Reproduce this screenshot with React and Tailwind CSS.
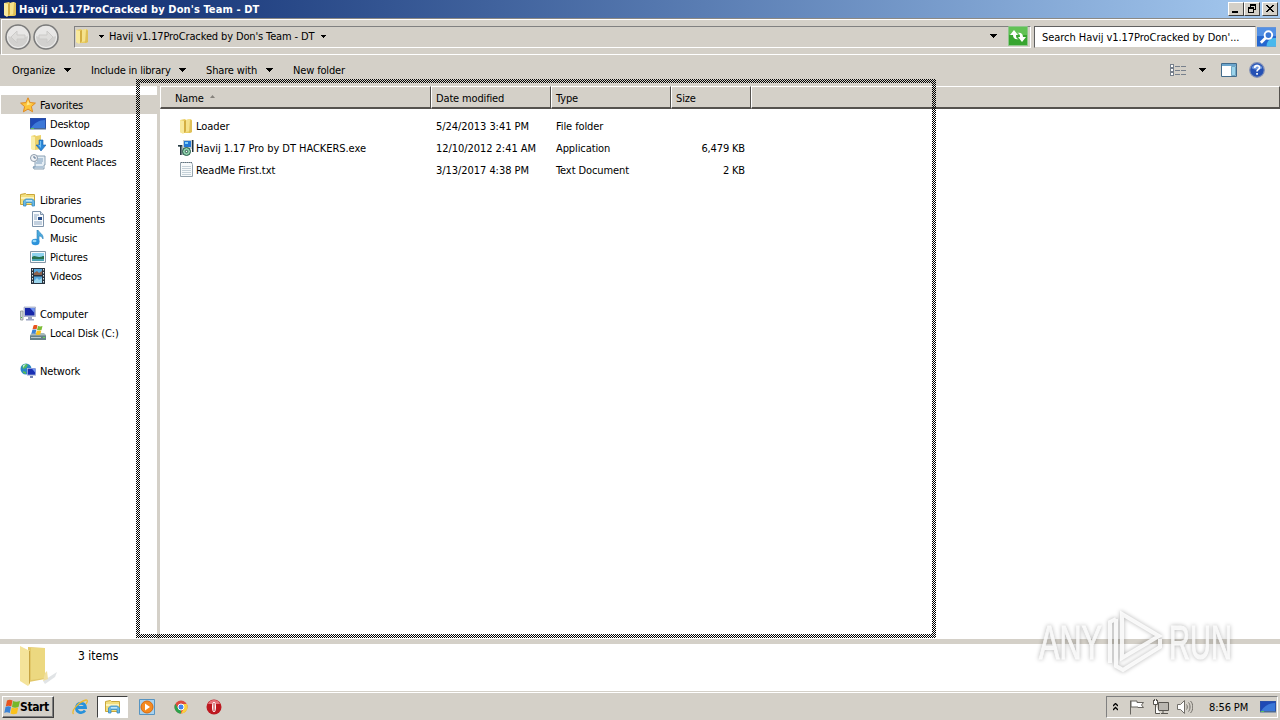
import React from "react";

const Folder = ({ className = "w-4 h-4" }) => (
  <svg className={className} viewBox="0 0 16 16">
    <path d="M2 2l5-1 1 1 4-1 2 1v12l-2 1H4l-2-1z" fill="#e9cd62" />
    <path d="M2 2l4 1v12l-1 1-3-2z" fill="#f8e99c" />
    <path d="M6 3l2-1v11l-2 2z" fill="#d3ae42" />
    <path d="M8 2l4-1v12l-4 1z" fill="#f5e28c" />
    <path d="M12 2l2 1v11l-3 1z" fill="#dfc058" />
  </svg>
);

const Star = () => (
  <svg className="w-4 h-4" viewBox="0 0 16 16">
    <path
      d="M8 .8l2.1 4.8 5.3.5-4 3.5 1.2 5.2L8 12.1l-4.6 2.7 1.2-5.2-4-3.5 5.3-.5z"
      fill="#fdc53a"
      stroke="#e08a20"
    />
    <path d="M8 3l1.3 3.6 3 .2-5.8 1.6z" fill="#ffe890" />
  </svg>
);

const DesktopIcon = () => (
  <svg className="w-4 h-4" viewBox="0 0 16 16">
    <rect x="0" y="2" width="16" height="11" fill="#2a50a8" />
    <rect x="1" y="3" width="14" height="9" fill="#1f49b5" />
    <path d="M1 12c3-5 8-8 14-8v8z" fill="#3c78d8" />
    <path d="M0 12h16v1.500H0z" fill="#4b6a94" />
    <path d="M1 12h3v1H1z" fill="#5bc05b" />
  </svg>
);

const Downloads = () => (
  <svg className="w-4 h-4" viewBox="0 0 16 16">
    <path d="M1 1l4-1 1 1 5-1v14l-6 1-4-1z" fill="#ecd26b" />
    <path d="M1 1l4 1v13l-4-1z" fill="#faeeaa" />
    <path d="M9 5h4v5h3l-5 6-5-6h3z" fill="#2c88d8" stroke="#1b61ab" strokeWidth=".6" />
    <path d="M10 6h1v7l-3-3h2z" fill="#74c0f4" />
  </svg>
);

const Recent = () => (
  <svg className="w-4 h-4" viewBox="0 0 16 16">
    <path d="M5 2h10v9h-1v4H4l-1-2h2z" fill="#e4edf4" stroke="#8097ab" strokeWidth=".9" />
    <path d="M7 5h6M7 7h6M6 9h6M3 13h10" stroke="#7d9dbb" />
    <circle cx="4" cy="4" r="3.500" fill="#f1f3f6" stroke="#8e9cab" />
    <path d="M4 2v2h2" stroke="#58738f" fill="none" />
  </svg>
);

const Libraries = () => (
  <svg className="w-4 h-4" viewBox="0 0 16 16">
    <path d="M.5 2.500l5-1 1 1h8v10H.5z" fill="#f3df7d" stroke="#c9a63a" />
    <path d="M1 5h13v2H1z" fill="#fbf3bd" />
    <path d="M3.500 14V9l2-2h7l2 2v5h-2.500v-3.500h-6V14z" fill="#68b8e6" stroke="#388bc1" strokeWidth=".8" />
    <path d="M6 8h6v1.500H6z" fill="#bce5fa" />
  </svg>
);

const Documents = () => (
  <svg className="w-4 h-4" viewBox="0 0 16 16">
    <path d="M2.500.5h8l3 3v12h-11z" fill="#f9fbfd" stroke="#7e93aa" />
    <path d="M4 4h5M4 6h3M4 8h3M4 11h8M4 13h8" stroke="#8ba5c0" />
    <path d="M8 6h4v3H8z" fill="#274c88" />
    <path d="M10.500.5v3h3" fill="#d5e1ec" stroke="#7e93aa" />
  </svg>
);

const Music = () => (
  <svg className="w-4 h-4" viewBox="0 0 16 16">
    <path d="M8 0c1 3 6 4 5 9-1-2-2-3-4-3v6H7V0z" fill="#4ba9dc" stroke="#2a80bb" strokeWidth=".6" />
    <ellipse cx="5.500" cy="12" rx="4" ry="3.200" fill="#2d93da" />
    <ellipse cx="4.500" cy="11" rx="2" ry="1.300" fill="#96d8f7" />
  </svg>
);

const Pictures = () => (
  <svg className="w-4 h-4" viewBox="0 0 16 16">
    <path d="M.5 2.500h15v11H.5z" fill="#f7fafc" stroke="#8497a7" />
    <path d="M2 4h12v8H2z" fill="#8fd3ee" />
    <path d="M2 8c3-2 4 0 7 0s3-1 5-1v4H2z" fill="#28734f" />
    <path d="M2 10h12v2H2z" fill="#4ba3b5" />
  </svg>
);

const Videos = () => (
  <svg className="w-4 h-4" viewBox="0 0 16 16">
    <path d="M1 0h14v16H1z" fill="#28333f" />
    <path d="M4 1h8v6H4zM4 8.500h8V15H4z" fill="#56a7dd" />
    <path d="M4 5l3-2 2 2 3-2v4H4z" fill="#8d624e" />
    <path d="M4 13l3-3 2 2 3-2v5H4z" fill="#9bd5ec" />
    <path d="M2.500 1v14M13.500 1v14" stroke="#dfe6ea" strokeDasharray="1.500 1.500" />
  </svg>
);

const Computer = () => (
  <svg className="w-4 h-4" viewBox="0 0 16 16">
    <path d="M.5 5h2.500v9H.5z" fill="#cfd6d6" stroke="#899393" strokeWidth=".8" />
    <path d="M1 11h1v1H1z" fill="#4eb844" />
    <path d="M4 1h11.500v9.500H4z" fill="#c7cee0" stroke="#8a95b5" strokeWidth=".6" />
    <path d="M5 2h9.500v7.500H5z" fill="#1626a8" />
    <path d="M10 2h4.500v5z" fill="#6c91ef" />
    <path d="M8 11h4v2h2v1.500H6V13h2z" fill="#9ba4c4" />
  </svg>
);

const StartFlag = () => (
  <svg className="w-4 h-4" viewBox="0 0 16 16">
    <path d="M3 1.500c2-1 3.500-1 5.500 0L7.300 7.500c-2-1-4-1-5.500 0z" fill="#e8541e" />
    <path d="M9 2c2 1 4.500 1 7 0L14.500 8c-2.500 1-4.500 1-6.500 0z" fill="#76b82a" />
    <path d="M1.500 8c2-1 4-1 5.500 0l-1.200 6c-2-1-4-1-5.500 0z" fill="#3b83d6" />
    <path d="M7.700 8.500c2 1 4 1 6.500 0l-1.200 6c-2.500 1-5 1-6.500 0z" fill="#fbc21b" />
  </svg>
);

const Disk = () => (
  <svg className="w-4 h-4" viewBox="0 0 16 16">
    <path d="M2 8h12l2 2v5H0v-5z" fill="#a5b8bc" />
    <path d="M0 10.500h16V15H0z" fill="#668188" />
    <path d="M1 12h10v1H1z" fill="#b9c9cd" />
    <path d="M13 12h2v1h-2z" fill="#67dc54" />
    <path d="M3.500.5c1.500-.7 2.500-.5 4 0l-1 4c-1.500-.6-2.500-.6-4 0z" fill="#e8541e" />
    <path d="M8 1c1.500.6 3 .6 4.500 0l-1 4c-1.500.6-3 .6-4.500 0z" fill="#7dbc35" />
    <path d="M2.300 5c1.500-.6 2.500-.6 4 0l-1 4c-1.500-.6-2.500-.6-4 0z" fill="#3b83d6" />
    <path d="M6.800 5.500c1.500.6 3 .6 4.500 0l-1 4c-1.500.6-3 .6-4.500 0z" fill="#fbc21b" />
  </svg>
);

const Network = () => (
  <svg className="w-4 h-4" viewBox="0 0 16 16">
    <circle cx="6" cy="6" r="5.500" fill="#2b86c6" />
    <path d="M2 3c2-3 5-2 6-1L6 5 3 6zM3 8l3 1v2L3 10z" fill="#54bb5c" />
    <path d="M3 2l3-1-3 4z" fill="#b6e8ee" />
    <path d="M7 5h9v8H7z" fill="#c3cce4" />
    <path d="M7.700 5.700h7.600v6H7.700z" fill="#1930b4" />
    <path d="M12 5.700h3.300v4z" fill="#6f95f0" />
    <path d="M10 13h3v2h-3z" fill="#7583b4" />
  </svg>
);

const Installer = () => (
  <svg className="w-4 h-4" viewBox="0 0 16 16">
    <path d="M1 5h6v10H2v-8H0z" fill="#a9b4b6" />
    <path d="M0 5h4v1.500H0zM2 6h1.500v9H2zM6 6h1v8H6z" fill="#263a42" />
    <path d="M5 0h10v9H5z" fill="#c2cbcf" />
    <path d="M6 1h7v6H6z" fill="#2378d6" />
    <path d="M7 2h3v2H7z" fill="#82d2f9" />
    <path d="M14 0h1.500v12H14z" fill="#203038" />
    <circle cx="8.500" cy="11.500" r="4" fill="#8fd0ab" stroke="#245846" />
    <circle cx="8.500" cy="11.500" r="1.200" fill="#fff" stroke="#245846" />
  </svg>
);

const TextFile = () => (
  <svg className="w-4 h-4" viewBox="0 0 16 16">
    <path d="M2.500.5h11l1 2v12h-12z" fill="#f7fafb" stroke="#94a3ad" />
    <path d="M4 4.500h9M4 6.500h9M4 8.500h9M4 10.500h9M4 12.500h9" stroke="#b7c6cf" strokeWidth=".8" />
    <path d="M3 .5h11" stroke="#65747d" strokeDasharray="1 1" />
  </svg>
);

const Caret = ({ className = "w-[7px] h-1" }) => (
  <svg className={`shrink-0 ${className}`} viewBox="0 0 7 4" shapeRendering="crispEdges">
    <path d="M0 0h7L3.500 4z" />
  </svg>
);

const RoundArrow = ({ flip }) => (
  <svg className={`w-[26px] h-[26px] ${flip ? "-scale-x-100" : ""}`} viewBox="0 0 26 26">
    <circle cx="13" cy="13" r="12" fill="#d2d1cf" stroke="#7b7b7b" strokeWidth="1.500" />
    <circle cx="13" cy="13" r="10.500" fill="none" stroke="#efefee" />
    <path d="M3 12a10 10 0 0 1 20 0c-6 2-14 2-20 0z" fill="#e8e7e6" />
    <path d="M6 13l6-6v4h8v4h-8v4z" fill="#dedddb" stroke="#cbcac8" />
  </svg>
);

const places = [
  { label: "Favorites", icon: Star, root: true, active: true },
  { label: "Desktop", icon: DesktopIcon },
  { label: "Downloads", icon: Downloads },
  { label: "Recent Places", icon: Recent },
  null,
  { label: "Libraries", icon: Libraries, root: true },
  { label: "Documents", icon: Documents },
  { label: "Music", icon: Music },
  { label: "Pictures", icon: Pictures },
  { label: "Videos", icon: Videos },
  null,
  { label: "Computer", icon: Computer, root: true },
  { label: "Local Disk (C:)", icon: Disk },
  null,
  { label: "Network", icon: Network, root: true },
];

const files = [
  { name: "Loader", date: "5/24/2013 3:41 PM", type: "File folder", size: "", icon: Folder },
  { name: "Havij 1.17 Pro by DT HACKERS.exe", date: "12/10/2012 2:41 AM", type: "Application", size: "6,479 KB", icon: Installer },
  { name: "ReadMe First.txt", date: "3/13/2017 4:38 PM", type: "Text Document", size: "2 KB", icon: TextFile },
];

const WindowButton = ({ children, className = "" }) => (
  <button
    className={`w-4 h-[14px] bg-[#d4d0c8] border border-t-white border-l-white border-r-[#404040] border-b-[#404040] ${className}`}
  >
    <svg className="w-[14px] h-3" viewBox="0 0 14 12" fill="none" stroke="#000" shapeRendering="crispEdges">
      {children}
    </svg>
  </button>
);

const TitleBar = () => (
  <div className="h-[18px] flex items-center pl-[2px] pr-[2px] bg-linear-to-r from-[#0a246a] to-[#a6caf0] shrink-0">
    <Folder />
    <span className="ml-px text-white font-bold tracking-[0.11px] text-[11px]">
      Havij v1.17ProCracked by Don's Team - DT
    </span>
    <div className="ml-auto flex">
      <WindowButton>
        <path d="M3 9h6" strokeWidth="2" />
      </WindowButton>
      <WindowButton>
        <path d="M5 2h6M5 1.500h6M5.500 1v3M10.500 2v5M8 6.500h3M3 4.500h6M3 5.500h6M3.500 5v5M8.500 5v5M3 9.500h6" />
      </WindowButton>
      <WindowButton className="ml-[2px]">
        <path d="M3 2l7 7M4 2l7 7M10 2L3 9M11 2L4 9" shapeRendering="auto" />
      </WindowButton>
    </div>
  </div>
);

const AddressBar = () => (
  <div className="h-[37px] shrink-0 flex items-center pl-1 pr-[2px] border-t border-b border-t-[#8c8984] border-b-white border-l border-l-[#aaa7a1] shadow-[inset_1px_1px_0_#fff]">
    <div className="w-[56px] flex gap-[2px]">
      <RoundArrow />
      <RoundArrow flip />
    </div>
    <div className="ml-[13px] w-[957px] h-[22px] pb-px flex items-center border border-t-[#808080] border-l-[#808080] border-b-white border-r-white">
      <Folder className="w-4 h-4 -ml-px shrink-0" />
      <Caret className="ml-[9px] w-[5px] h-[3px]" />
      <span className="ml-[5px] !pt-px tracking-[-0.13px]">Havij v1.17ProCracked by Don's Team - DT</span>
      <Caret className="ml-[7px] w-[5px] h-[3px]" />
      <Caret className="ml-auto mr-[11px] w-[7px] h-1" />
      <svg className="w-5 h-5 mr-[2px]" viewBox="0 0 20 20">
        <path d="M.5.5h19v19H.5z" fill="#37a52f" stroke="#8fc78c" />
        <path d="M1 1h18v8H1z" fill="#62c255" />
        <path d="M2 9l4-5 4 5H8c0 3 1 4 3 4-4 1-6-1-6-4z" fill="#fff" />
        <path d="M18 11l-4 5-4-5h2c0-3-1-4-3-4 4-1 6 1 6 4z" fill="#fff" />
      </svg>
    </div>
    <div className="ml-[3px] w-[222px] h-[22px] pl-[7px] flex items-center bg-white border border-t-[#606060] border-l-[#606060] border-[#d4d0c8]">
      <span className="tracking-[-0.05px]">Search Havij v1.17ProCracked by Don'...</span>
    </div>
    <svg className="ml-px w-[19px] h-[20px]" viewBox="0 0 20 20">
      <path d="M0 0h20v20H0z" fill="#2567cf" />
      <path d="M0 0h20v9H0z" fill="#5290e4" />
      <path d="M10 20c0-6 4-9 10-9v9z" fill="#49b8ec" />
      <path d="M9 11l-5 5" stroke="#fff" strokeWidth="3" />
      <circle cx="12" cy="8" r="4" fill="#3977d5" stroke="#fff" strokeWidth="2" />
    </svg>
  </div>
);

const Toolbar = () => (
  <div className="h-[31px] shrink-0 flex items-center pb-px pl-3 pr-[15px] tracking-[-0.15px]">
    <span className="w-[52px]">Organize</span>
    <Caret />
    <span className="ml-5 w-[88px] tracking-[-0.2px]">Include in library</span>
    <Caret />
    <span className="ml-5 w-[60px]">Share with</span>
    <Caret />
    <span className="ml-5">New folder</span>
    <svg className="ml-auto w-4 h-[13px]" viewBox="0 0 16 13" shapeRendering="crispEdges">
      <path d="M.5.5h3v3h-3zM.5 4.500h3v3h-3zM.5 8.500h3v3h-3z" fill="#fff" stroke="#77808c" />
      <path d="M5 2.500h11M5 6.500h11M5 10.500h11" stroke="#77808c" strokeDasharray="5 1" />
    </svg>
    <Caret className="ml-[13px] w-[7px] h-1" />
    <svg className="ml-[15px] w-4 h-[14px]" viewBox="0 0 16 14">
      <path d="M.5.5h15v13H.5z" fill="#fff" stroke="#426b8b" />
      <path d="M1 1h14v2H1z" fill="#6ba5cc" />
      <path d="M10.500 3.500h4v9h-4z" fill="#9bd4ec" stroke="#5b95b5" strokeWidth=".8" />
    </svg>
    <svg className="ml-3 w-4 h-4" viewBox="0 0 16 16">
      <circle cx="8" cy="8" r="7.300" fill="#2450b4" stroke="#8291b8" strokeWidth="1.200" />
      <path d="M2.500 6a6 6 0 0 1 11 0c-3 2-8 2-11 0z" fill="#7198de" />
      <path d="M5.700 6c0-3 4.800-3 4.800-.3C10.500 7.500 8 7.400 8 9.600" fill="none" stroke="#fff" strokeWidth="1.700" />
      <path d="M7.200 11h1.700v1.700H7.200z" fill="#fff" />
    </svg>
  </div>
);

const Sidebar = () => (
  <div className="w-[157px] shrink-0 pt-[9px] bg-white">
    {places.map((place, i) => {
      if (!place) return <div key={i} className="h-[19px]" />;
      const Icon = place.icon;
      return (
        <div
          key={i}
          className={`h-[19px] ml-px flex items-center gap-1 ${place.root ? "pl-[19px]" : "pl-[29px]"} ${
            place.active ? "bg-[#d4d0c8]" : ""
          }`}
        >
          <Icon />
          <span className="tracking-[-0.17px]">{place.label}</span>
        </div>
      );
    })}
  </div>
);

const HeaderCell = ({ label, children, className }) => (
  <div
    className={`h-full pt-px flex items-center border-t border-t-white border-b-2 border-b-[#55524e] border-r border-r-[#55524e] border-l border-l-white bg-[#d4d0c8] ${className}`}
  >
    <span>{label}</span>
    {children}
  </div>
);

const FileList = () => (
  <div className="grow bg-white">
    <div className="h-[23px] flex tracking-[-0.15px]">
      <HeaderCell label="Name" className="w-[271px] pl-[14px]">
        <svg className="ml-[6px] mb-[2px] w-[5px] h-[3px]" viewBox="0 0 5 3">
          <path d="M0 3h5L2.500 0z" fill="#85827c" />
        </svg>
      </HeaderCell>
      <HeaderCell label="Date modified" className="w-[120px] pl-1" />
      <HeaderCell label="Type" className="w-[120px] pl-1" />
      <HeaderCell label="Size" className="w-[80px] pl-1" />
      <HeaderCell className="grow" />
    </div>
    <div className="pt-[6px]">
      {files.map((file) => {
        const Icon = file.icon;
        return (
          <div key={file.name} className="h-[22px] flex items-center tracking-[-0.05px]">
            <div className="w-[276px] pl-[18px] flex items-center gap-[2px]">
              <Icon />
              <span>{file.name}</span>
            </div>
            <span className="w-[120px]">{file.date}</span>
            <span className="w-[109px] tracking-[-0.1px]">{file.type}</span>
            <span className="w-[80px] text-right tracking-[-0.15px]">{file.size}</span>
          </div>
        );
      })}
    </div>
  </div>
);

const DetailsPane = () => (
  <div className="h-[53px] shrink-0 flex bg-white border-t-[5px] border-t-[#d4d0c8]">
    <svg className="ml-[19px] mt-px w-10 h-[42px]" viewBox="0 0 40 42">
      <path d="M24 36l14-9-2 5-10 7z" fill="#d9dde0" opacity=".8" />
      <path d="M9 2l17 1v31l-16 3z" fill="#e2c86a" />
      <path d="M12 3l14 0v30l-14 2z" fill="#ecd880" />
      <path d="M1 1l10 5v33l-2 2-8-5z" fill="#f4e39a" />
      <path d="M10 6l1 0v32l-1 1z" fill="#c7a443" />
      <path d="M26 28l2-2 1 8-5 2z" fill="#f0dfa0" />
    </svg>
    <span className="ml-[19px] mt-px text-[12px] leading-[18px]">3 items</span>
  </div>
);

const Taskbar = () => (
  <div className="h-7 shrink-0 flex items-center border-t border-t-white shadow-[0_-1px_0_#d4d0c8] pl-[2px]">
    <button className="w-[52px] h-[22px] flex items-center pl-px bg-[#d4d0c8] border border-t-white border-l-white border-r-[#404040] border-b-[#404040] shadow-[inset_-1px_-1px_0_#808080]">
      <StartFlag />
      <span className="font-bold text-[12px] !pt-0 tracking-[-0.4px]">Start</span>
    </button>
    <svg className="ml-[18px] w-4 h-4" viewBox="0 0 16 16">
      <path d="M13 11.500c-3 4-9 2-8.500-3 .5-5.500 8.500-5.500 9 0H6" fill="none" stroke="#2791db" strokeWidth="2.800" />
      <path d="M1.500 15C-1 12 6 3 14 1c3 0 0 4 0 4" fill="none" stroke="#eab931" strokeWidth="1.300" />
    </svg>
    <div className="ml-[9px] w-[31px] h-[22px] flex items-center justify-center bg-white border border-t-[#404040] border-l-[#404040] border-r-white border-b-white">
      <Libraries />
    </div>
    <svg className="ml-[11px] w-4 h-4" viewBox="0 0 16 16">
      <path d="M.5.5h15v15H.5z" fill="#a8d2ef" stroke="#5794c1" />
      <circle cx="8" cy="8" r="6" fill="#f58a1f" stroke="#d7690d" />
      <path d="M6 4.500l5 3.500-5 3.500z" fill="#fff" />
    </svg>
    <svg className="ml-[18px] w-4 h-4" viewBox="0 0 16 16">
      <circle cx="8" cy="8" r="6.500" fill="#dd4b3e" />
      <path d="M2.300 4.800L5.500 10 8 11v3.500A6.500 6.500 0 0 1 2.300 4.800z" fill="#2ba24c" />
      <path d="M8 5h5.800A6.500 6.500 0 0 1 8 14.500L11 9z" fill="#fbd03f" />
      <circle cx="8" cy="8" r="3" fill="#4284ee" stroke="#fff" />
    </svg>
    <svg className="ml-[17px] w-4 h-4" viewBox="0 0 16 16">
      <circle cx="8" cy="8" r="7.500" fill="#bd1820" />
      <path d="M2 5a6.500 6.500 0 0 1 12 0z" fill="#e6737a" />
      <ellipse cx="8" cy="8" rx="2" ry="5" fill="#fff" />
      <path d="M8 4v8" stroke="#bd1820" />
    </svg>
    <div className="ml-auto w-[172px] h-[22px] mr-[2px] flex items-center border border-t-[#808080] border-l-[#808080] border-r-white border-b-white">
      <svg className="ml-[6px] w-[5px] h-2" viewBox="0 0 5 8" fill="none" stroke="#000" strokeWidth="1.300">
        <path d="M0 3l2.500-2.500L5 3M0 7l2.500-2.500L5 7" />
      </svg>
      <svg className="ml-[11px] w-4 h-4" viewBox="0 0 16 16" fill="#fff" stroke="#67645f">
        <path d="M1.500 1.500v14M2 2h6v1.500h6.500l-2 2.500 2 2.500H9V8H2z" />
      </svg>
      <svg className="ml-2 w-4 h-4" viewBox="0 0 16 16" fill="#fff" stroke="#57544f">
        <path d="M5.500 3.500h10v8h-10z" fill="#bab7b1" />
        <path d="M8 14.500h7M10 12v2M2.500 6v8.500H7M.5 1v4.500h4V1M1.500 0v2M3.500 0v2" />
      </svg>
      <svg className="ml-2 w-4 h-4" viewBox="0 0 16 16" fill="none" stroke="#716e69">
        <path d="M.5 5.500h3l4-4v13l-4-4h-3z" fill="#fff" />
        <path d="M9.500 5.500c1 1 1 4 0 5M11.500 3.500c2 2 2 7 0 9M13.500 2c3 3 3 9 0 12" />
      </svg>
      <span className="ml-4 w-[51px] tracking-[-0.1px]">8:56 PM</span>
      <DesktopIcon />
    </div>
  </div>
);

// checkered outline shown while the window is being dragged
const DragOutline = () => (
  <svg className="absolute left-[136px] top-[79px] w-[800px] h-[559px] pointer-events-none" shapeRendering="crispEdges">
    <defs>
      <pattern id="checker" width="2" height="2" patternUnits="userSpaceOnUse">
        <path d="M0 0h1v1H0zM1 1h1v1H1z" fill="#000" />
      </pattern>
    </defs>
    <path d="M0 0h800v559H0zM4 4v551h792V4z" fill="url(#checker)" fillRule="evenodd" />
  </svg>
);

const Watermark = () => (
  <svg className="absolute left-[1024px] top-[592px] w-[224px] h-[96px] overflow-visible pointer-events-none drop-shadow-[0_0_2px_rgba(0,0,0,0.35)]">
    <g
      fill="#fff"
      stroke="#fff"
      opacity=".85"
      fontFamily="Liberation Sans Narrow, Liberation Sans, sans-serif"
      fontSize="49"
    >
      <text x="15" y="67" textLength="63" lengthAdjust="spacingAndGlyphs">ANY</text>
      <text x="145" y="67" textLength="63" lengthAdjust="spacingAndGlyphs">RUN</text>
    </g>
    <g fill="none" stroke="#fff" strokeWidth="4" opacity=".85">
      <path d="M98 22l37 22-37 22z" />
      <path d="M92 27l-6 3v41M92 27v47l7 4 37-23v-8" />
    </g>
  </svg>
);

const App = () => {
  return (
    <div className="relative w-[1280px] h-[720px] overflow-hidden flex flex-col bg-[#d4d0c8] text-black text-[11px] leading-[14px] whitespace-nowrap font-['DejaVu_Sans_Condensed','DejaVu_Sans',sans-serif] [&_span]:pt-[2px]">
      <TitleBar />
      <AddressBar />
      <Toolbar />
      <div className="grow flex min-h-0">
        <Sidebar />
        <div className="w-[3px] shrink-0 bg-[#d4d0c8]" />
        <FileList />
      </div>
      <DetailsPane />
      <Taskbar />
      <DragOutline />
      <Watermark />
    </div>
  );
};

export default App;
